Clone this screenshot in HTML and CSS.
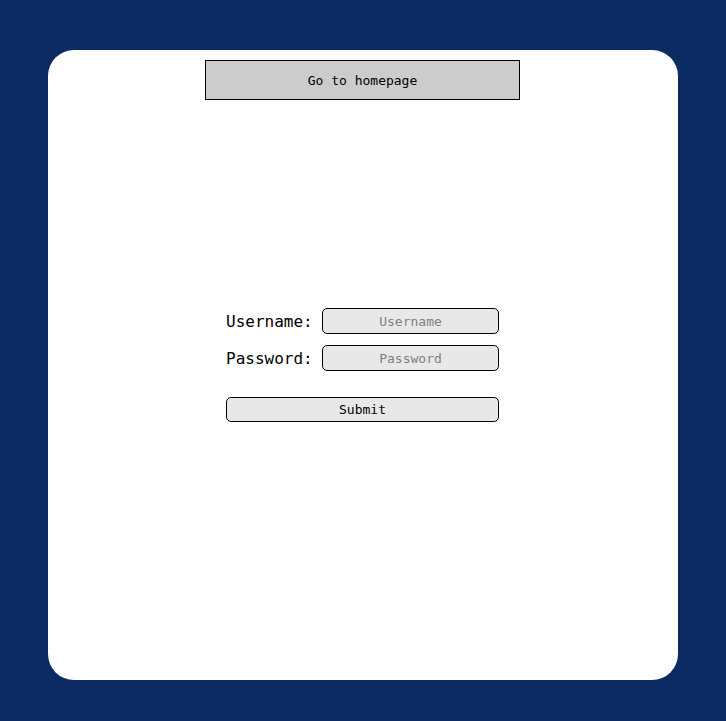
FILE: index.html
```html
<!DOCTYPE html>
<html>
<head>
<meta charset="utf-8">
<link rel="stylesheet" href="styles.css">
</head>
<body>
<div class="card">
  <button class="home">Go to homepage</button>
  <form class="login">
    <div class="row">
      <label class="lbl">Username:</label>
      <input class="field" type="text" placeholder="Username">
    </div>
    <div class="row">
      <label class="lbl">Password:</label>
      <input class="field" type="password" placeholder="Password">
    </div>
    <button class="submit" type="button">Submit</button>
  </form>
</div>
</body>
</html>
```
FILE: styles.css
```css
html, body {
  margin: 0;
  padding: 0;
}
body {
  background: #0d2b63;
  width: 726px;
  height: 721px;
  padding: 50px 0 0 48px;
  box-sizing: border-box;
  font-family: "DejaVu Sans Mono", monospace;
}
.card {
  width: 630px;
  height: 630px;
  background: #fff;
  border-radius: 26px;
  display: grid;
  grid-template: 1fr / 1fr;
}
.home {
  grid-area: 1 / 1;
  align-self: start;
  justify-self: start;
  margin: 10px 0 0 157px;
  width: 315px;
  height: 40px;
  background: #cccccc;
  border: 1px solid #000;
  font-family: "DejaVu Sans Mono", monospace;
  font-size: 13px;
  color: #000;
  padding: 0;
}
.login {
  grid-area: 1 / 1;
  align-self: center;
  justify-self: start;
  display: flex;
  flex-direction: column;
  width: 273px;
  margin: 0 0 0 178px;
}
.row {
  display: flex;
  align-items: center;
  justify-content: space-between;
  margin-bottom: 11px;
}
.lbl {
  font-size: 16px;
  color: #000;
}
.field {
  width: 177px;
  height: 26px;
  box-sizing: border-box;
  border: 1px solid #000;
  border-radius: 5px;
  background: #e8e8e8;
  text-align: center;
  font-family: "DejaVu Sans Mono", monospace;
  font-size: 13px;
  padding: 0;
}
.field::placeholder {
  color: #808080;
}
.submit {
  margin-top: 15px;
  width: 273px;
  height: 25px;
  box-sizing: border-box;
  border: 1px solid #000;
  border-radius: 5px;
  background: #e8e8e8;
  font-family: "DejaVu Sans Mono", monospace;
  font-size: 13px;
  color: #000;
  padding: 0;
}
```
